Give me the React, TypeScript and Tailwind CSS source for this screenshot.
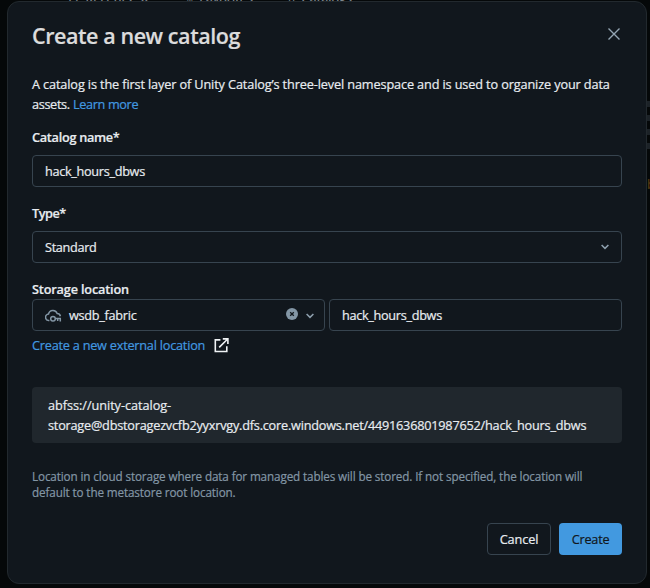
import React from "react";

function CloudKeyIcon() {
  return (
    <svg width="17" height="13" viewBox="0 0 17 13" fill="none" stroke="#8396a5" strokeWidth="1.5">
      <path d="M4.4 11.4H4A3.2 3.2 0 0 1 3.5 5A4.5 4.5 0 0 1 12.2 4.6A3.4 3.4 0 0 1 15.4 7.2" />
      <circle cx="8" cy="9.8" r="2.3" />
      <path d="M10.2 9.6H16M15.3 9.6V12.6M12.7 9.6V12" />
    </svg>
  );
}

function ExternalIcon() {
  return (
    <svg width="15" height="15" viewBox="0 0 15 15" fill="none" stroke="#f0f3f5" strokeWidth="1.6">
      <path d="M6.4 1.9H1.3V13.5H12.8V8.3" />
      <path d="M5.2 9.4L13.4 1.3M8.8 0.9H13.9V6" />
    </svg>
  );
}

function ChevronIcon() {
  return (
    <svg width="8" height="6" viewBox="0 0 8 6" fill="none" stroke="#8ea0ae" strokeWidth="1.5">
      <path d="M0.6 1L4 4.4L7.4 1" />
    </svg>
  );
}

function ClearIcon() {
  return (
    <svg width="12" height="12" viewBox="0 0 12 12">
      <circle cx="6" cy="6" r="6" fill="#8396a5" />
      <path d="M4.2 4.2L7.8 7.8M7.8 4.2L4.2 7.8" stroke="#11171c" strokeWidth="1.3" />
    </svg>
  );
}

const field = "flex h-8 items-center rounded border border-[#37444f] px-3";

export default function App() {
  return (
    <div className="relative h-[588px] w-[650px] overflow-hidden bg-[#050809] font-['Open_Sans','Noto_Sans',sans-serif] text-[12.7px] leading-5 text-[#e8ecf0] [-webkit-text-stroke:0.2px]">
      <div className="absolute -top-[12px] left-[68px] flex text-[12.7px] leading-5 whitespace-nowrap text-[#8a9299]">
        <span className="w-[116px]">⊙&nbsp; Recents &nbsp;⌄</span>
        <span className="w-[104px]">☆ Favorites</span>
        <span>▯ &nbsp;Catalogs</span>
      </div>
      <div className="absolute top-[101px] left-[647px] flex w-[3px] flex-col gap-2 text-[#1c2227]">
        <i className="h-[6px] bg-current" />
        <i className="h-[6px] bg-current" />
        <i className="h-[6px] bg-current" />
        <i className="h-[6px] bg-current" />
      </div>
      <div className="absolute top-[174px] left-[647px] w-[3px] overflow-hidden text-[#5a3c12]">b</div>

      <div className="relative mt-px ml-[7px] flex h-[583px] w-[640px] flex-col rounded-xl border border-[#22292e] bg-[#11171d] px-6 whitespace-nowrap">
        <header className="mt-[17px] flex h-8 items-center justify-between">
          <h1 className="pt-[1px] text-[21.5px] leading-8 font-semibold tracking-[-0.43px] text-[#dcdcdc]">Create a new catalog</h1>
          <svg className="-mt-[2px] mr-[2px]" width="12" height="12" viewBox="0 0 12 12" stroke="#94a5b3" strokeWidth="1.4">
            <path d="M0.5 0.5L11.5 11.5M11.5 0.5L0.5 11.5" />
          </svg>
        </header>

        <p className="mt-[23px]">
          <span className="block tracking-[-0.122px]">A catalog is the first layer of Unity Catalog’s three-level namespace and is used to organize your data</span>
          <span className="flex">
            <span className="w-[41px] tracking-[-0.34px]">assets.</span>
            <a className="tracking-[-0.36px] text-[#4299e0]">Learn more</a>
          </span>
        </p>

        <label className="mt-[13px] font-semibold tracking-[-0.28px]">Catalog name*</label>
        <div className={`${field} mt-2`}>
          <span className="tracking-[-0.31px]">hack_hours_dbws</span>
        </div>

        <label className="mt-4 font-semibold tracking-[-0.45px]">Type*</label>
        <div className={`${field} mt-2 justify-between`}>
          <span className="tracking-[-0.32px]">Standard</span>
          <ChevronIcon />
        </div>

        <label className="mt-4 font-semibold tracking-[-0.16px]">Storage location</label>
        <div className="flex gap-1">
          <div className={`${field} w-[293px] pr-[10px]`}>
            <CloudKeyIcon />
            <span className="ml-[7px] flex-1 tracking-[-0.28px]">wsdb_fabric</span>
            <span className="-mt-[2px]">
              <ClearIcon />
            </span>
            <span className="mt-[2px] ml-2">
              <ChevronIcon />
            </span>
          </div>
          <div className={`${field} flex-1`}>
            <span className="tracking-[-0.31px]">hack_hours_dbws</span>
          </div>
        </div>
        <div className="mt-1 flex h-5 items-center">
          <a className="w-[182px] tracking-[-0.22px] text-[#4299e0]">Create a new external location</a>
          <ExternalIcon />
        </div>

        <div className="mt-8 h-14 rounded bg-[#20272d] px-4 py-2">
          <span className="block tracking-[-0.04px]">abfss://unity-catalog-</span>
          <span className="block tracking-[-0.216px]">storage@dbstoragezvcfb2yyxrvgy.dfs.core.windows.net/4491636801987652/hack_hours_dbws</span>
        </div>

        <p className="mt-[25px] text-[11.7px] leading-4 tracking-[-0.122px] text-[#8396a5]">
          <span className="block">Location in cloud storage where data for managed tables will be stored. If not specified, the location will</span>
          <span className="block">default to the metastore root location.</span>
        </p>

        <footer className="mt-[23px] flex justify-end gap-2">
          <button className="h-8 w-16 rounded border border-[#37444f] tracking-[-0.1px]">Cancel</button>
          <button className="h-8 w-[63px] rounded bg-[#4299e0] tracking-[-0.22px] text-[#11171c]">Create</button>
        </footer>
      </div>
    </div>
  );
}
